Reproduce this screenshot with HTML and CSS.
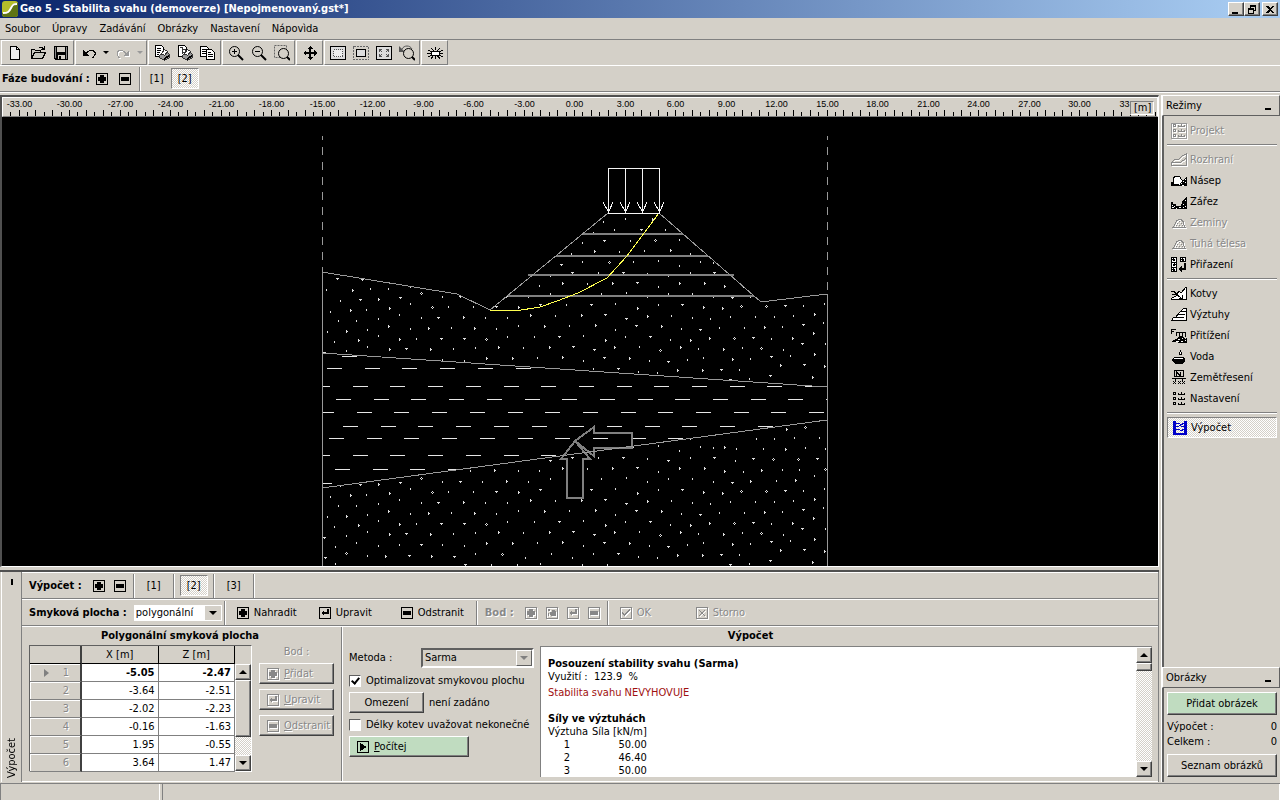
FILE: index.html
```html
<!DOCTYPE html>
<html lang="cs">
<head>
	<meta charset="UTF-8">
	<title>Geo 5 - Stabilita svahu</title>
	<link rel="stylesheet" href="styles.css">
</head>
<body>
	<!-- shared icons -->
	<svg class="defs" width="0" height="0">
		<symbol id="i-plus" viewBox="0 0 12 12">
			<rect x="0.5" y="0.5" width="11" height="11" rx="1" fill="none" stroke="currentColor"/>
			<path d="M4 2h4v2h2v4h-2v2h-4v-2h-2v-4h2z" fill="currentColor"/>
		</symbol>
		<symbol id="i-minus" viewBox="0 0 12 12">
			<rect x="0.5" y="0.5" width="11" height="11" rx="1" fill="none" stroke="currentColor"/>
			<path d="M2 4h8v4h-8z" fill="currentColor"/>
		</symbol>
		<symbol id="i-enter" viewBox="0 0 12 12">
			<rect x="0.5" y="0.5" width="11" height="11" rx="1" fill="none" stroke="currentColor"/>
			<path d="M2 6l3-3v2h3v-3h2v5h-5v2z" fill="currentColor"/>
		</symbol>
		<symbol id="i-insert" viewBox="0 0 12 12">
			<rect x="0.5" y="0.5" width="11" height="11" rx="1" fill="none" stroke="currentColor"/>
			<path d="M2 2h2v2h-2zM2 6h1v3h-1zM6 3h3v1h1v5h-5v-1h-1v-3h2z" fill="currentColor"/>
		</symbol>
		<symbol id="i-ok" viewBox="0 0 12 12">
			<rect x="0.5" y="0.5" width="11" height="11" rx="1" fill="none" stroke="currentColor"/>
			<path d="M2 5h1v1h1v1h1v-1h1v-1h1v-1h1v-1h1v-1h1v2h-1v1h-1v1h-1v1h-1v1h-1v1h-1v-1h-1v-1h-1z" fill="currentColor"/>
		</symbol>
		<symbol id="i-cancel" viewBox="0 0 12 12">
			<rect x="0.5" y="0.5" width="11" height="11" rx="1" fill="none" stroke="currentColor"/>
			<path d="M3 3l6 6M9 3l-6 6" fill="none" stroke="currentColor"/>
		</symbol>
		<symbol id="i-run" viewBox="0 0 12 12">
			<rect x="0.5" y="0.5" width="11" height="11" rx="1" fill="none" stroke="currentColor"/>
			<path d="M3 2l7 4l-7 4z" fill="currentColor"/>
		</symbol>
		<symbol id="i-heap" viewBox="0 0 16 16">
			<path d="M1 12.500h14M2.500 12l3-6l3-2h1l3 3l1 5M5 10.500h1M6 8.500h1M8 6.500h1M8 10.500h1M10 8.500h1M11 10.500h1" fill="none" stroke="currentColor"/>
		</symbol>
		<symbol id="i-list" viewBox="0 0 16 16">
			<path d="M2.500 1.500h2v2h-2zM2.500 6.500h2v2h-2zM2.500 11.500h2v2h-2zM7 3.500h7M7 8.500h7M7 13.500h7M7.500 2v1M10.500 1v2M13.500 2v1M7.500 7v1M10.500 6v2M13.500 7v1M7.500 12v1M10.500 11v2M13.500 12v1" fill="none" stroke="currentColor"/>
		</symbol>
	</svg>

	<header class="title">
		<svg class="logo" width="16" height="16" viewBox="0 0 16 16">
			<rect width="16" height="16" rx="3" fill="#b5bd2b"/>
			<path d="M0 12c5 0 6-1 8-5s4-5 8-5v11a3 3 0 0 1-3 3h-10a3 3 0 0 1-3-3z" fill="#5f7414"/>
			<path d="M1 12c5 0 6-1 8-5s3-4 6-4" fill="none" stroke="#fff" stroke-width="2"/>
		</svg>
		<h1>Geo 5 - Stabilita svahu (demoverze) [Nepojmenovaný.gst*]</h1>
		<div class="winbtns">
			<button aria-label="Minimalizovat"><svg width="10" height="9"><path d="M1 7h6v2h-6z"/></svg></button>
			<button aria-label="Obnovit"><svg width="10" height="9"><path d="M3 0h6v6h-2v-1h1v-3h-4v1h-1zM1 3h6v6h-6zM2 5v3h4v-3z" fill-rule="evenodd"/></svg></button>
			<button class="close" aria-label="Zavřít"><svg width="10" height="9"><path d="M1 1h2l2 2l2-2h2l-3 3.500l3 3.500h-2l-2-2l-2 2h-2l3-3.500z"/></svg></button>
		</div>
	</header>

	<nav class="menu">
		<a href="#">Soubor</a>
		<a href="#">Úpravy</a>
		<a href="#">Zadávání</a>
		<a href="#">Obrázky</a>
		<a href="#">Nastavení</a>
		<a href="#">Nápovìda</a>
	</nav>

	<div class="toolbar">
		<div class="group">
			<button aria-label="Nový"><svg class="ico" viewBox="0 0 16 16"><path d="M3.500 1.500h6l3 3v10h-9z" fill="#eee" stroke="#000"/><path d="M9.500 1.500v3h3" fill="none" stroke="#000"/></svg></button>
			<button aria-label="Otevřít"><svg class="ico" viewBox="0 0 16 16"><path d="M1.500 13.500v-9h3l1 1h5v2M1.500 13.500l3-6h11l-3 6z" fill="#c8c8c0" stroke="#000"/><path d="M9 2.500h3l2 2M14.500 1v4M11 4.500h3" fill="none" stroke="#000"/></svg></button>
			<button aria-label="Uložit"><svg class="ico" viewBox="0 0 16 16"><path d="M1 1h14v14h-13l-1-1z"/><path d="M4 2h8v5h-8z" fill="#d4d0c8"/><path d="M5 10h7v4h-7z" fill="#d4d0c8"/><path d="M6 11h2v3h-2z"/><path d="M2.500 2v11M13.500 2v12" stroke="#888"/></svg></button>
		</div>
		<div class="group">
			<button aria-label="Zpět"><svg class="ico" viewBox="0 0 16 16"><path d="M2 5v6h6z"/><path d="M5 8.500l2-2l2-1h3l2 2v2l-2 3h-1" fill="none" stroke="#000"/></svg></button>
			<button class="drop" aria-label="Seznam zpět"><i class="down"></i></button>
			<button disabled aria-label="Znovu"><svg class="ico" viewBox="0 0 16 16"><path d="M14 5v6h-6z" fill="#999"/><path d="M11 8.500l-2-2l-2-1h-3l-2 2v2l2 3h1" fill="none" stroke="#999"/></svg></button>
			<button class="drop" disabled aria-label="Seznam znovu"><i class="down"></i></button>
		</div>
		<div class="group">
			<button aria-label="Tisk"><svg class="ico" viewBox="0 0 16 16"><path d="M1.500 0.500h6l2 2v9h-8z" fill="#fff" stroke="#000"/><path d="M3 3.500h4M3 5.500h4M3 7.500h3M3 9.500h2" stroke="#000"/><path d="M5.500 10.500l5-4h2l3 3v3l-5 3l-5-3z" fill="#999" stroke="#333"/><path d="M7.500 8.500l3-4l3 2l-3 4z" fill="#fff" stroke="#333"/><path d="M10 13l5-3v2l-5 3z"/></svg></button>
			<button aria-label="Tisk obrázku"><svg class="ico" viewBox="0 0 16 16"><path d="M1.500 0.500h6l2 2v9h-8z" fill="#fff" stroke="#000"/><path d="M3 2.500h2v6M5 4.500h3v3h-3" fill="none" stroke="#333"/><path d="M5.500 10.500l5-4h2l3 3v3l-5 3l-5-3z" fill="#999" stroke="#333"/><path d="M7.500 8.500l3-4l3 2l-3 4z" fill="#fff" stroke="#333"/><path d="M10 13l5-3v2l-5 3z"/></svg></button>
			<button aria-label="Kopírovat"><svg class="ico" viewBox="0 0 16 16"><path d="M0.500 1.500h6l2 2v8h-8z" fill="#fff" stroke="#000"/><path d="M2 4.500h4M2 6.500h4M2 8.500h4" stroke="#000"/><path d="M6.500 4.500h5l3 3v7h-8z" fill="#fff" stroke="#000"/><path d="M8 7.500h3M8 9.500h5M8 11.500h5" stroke="#000"/></svg></button>
		</div>
		<div class="group">
			<button aria-label="Přiblížit"><svg class="ico round" viewBox="0 0 16 16"><circle cx="6.500" cy="6.500" r="5" fill="none" stroke="#000"/><path d="M6.500 4v5M4 6.500h5" stroke="#000"/><path d="M10 10l5 5" stroke="#000" stroke-width="2"/></svg></button>
			<button aria-label="Oddálit"><svg class="ico round" viewBox="0 0 16 16"><circle cx="6.500" cy="6.500" r="5" fill="none" stroke="#000"/><path d="M4 6.500h5" stroke="#000"/><path d="M10 10l5 5" stroke="#000" stroke-width="2"/></svg></button>
			<button aria-label="Výřez"><svg class="ico round" viewBox="0 0 16 16"><path d="M0.500 0.500h12v12h-12z" fill="none" stroke="#666" stroke-dasharray="2 1"/><circle cx="9.500" cy="8.500" r="5" fill="#d4d0c8" stroke="#000"/><path d="M13 12l3 3" stroke="#000" stroke-width="2"/></svg></button>
		</div>
		<div class="group">
			<button aria-label="Posun"><svg class="ico" viewBox="0 0 16 16"><path d="M8 1l3 3h-2v3h3v-2l3 3l-3 3v-2h-3v3h2l-3 3l-3-3h2v-3h-3v2l-3-3l3-3v2h3v-3h-2z"/></svg></button>
		</div>
		<div class="group">
			<button aria-label="Celá kresba"><svg class="ico" viewBox="0 0 16 16"><path d="M0.500 1.500h15v13h-15z" fill="#ddd" stroke="#000"/><path d="M3.500 4.500h9v7h-9z" fill="#eee" stroke="#555" stroke-dasharray="1 1"/></svg></button>
			<button aria-label="Výběr"><svg class="ico" viewBox="0 0 16 16"><path d="M0.500 1.500h15v13h-15z" fill="none" stroke="#666" stroke-dasharray="2 1"/><path d="M3.500 4.500h9v7h-9z" fill="#ddd" stroke="#000"/></svg></button>
			<button aria-label="Na okno"><svg class="ico" viewBox="0 0 16 16"><path d="M0.500 1.500h15v13h-15z" fill="#ddd" stroke="#000"/><path d="M3.500 7v-2.500h2.500M10 4.500h2.500v2.500M12.500 9v2.500h-2.500M6 11.500h-2.500v-2.500M4 5l2 2M12 5l-2 2M12 11l-2-2M4 11l2-2" fill="none" stroke="#555"/></svg></button>
			<button aria-label="Předchozí zobrazení"><svg class="ico round" viewBox="0 0 16 16"><path d="M0 1v6h6z" fill="#555"/><path d="M3 4c2-4 8-4 10 0" fill="none" stroke="#555"/><circle cx="9.500" cy="8.500" r="5" fill="#d4d0c8" stroke="#000"/><path d="M13 12l3 3" stroke="#000" stroke-width="2"/></svg></button>
		</div>
		<div class="group">
			<button aria-label="Nastavení kresby"><svg class="ico" viewBox="0 0 16 16"><path d="M8.500 2v3M8.500 11v3M4 3l3 3M13 3l-3 3M4 14l3-4M13 14l-3-4M1 5l4 2M16 5l-4 2M1 12l4-2M16 12l-4-2M0 8.500h4M12 8.500h4" stroke="#000"/><ellipse cx="8.500" cy="8.500" rx="4" ry="2.500" fill="#fff" stroke="#000"/></svg></button>
		</div>
	</div>

	<div class="phases">
		<b>Fáze budování :</b>
		<button aria-label="Přidat fázi"><svg class="box"><use href="#i-plus"/></svg></button>
		<button aria-label="Odebrat fázi"><svg class="box"><use href="#i-minus"/></svg></button>
		<i class="sep"></i>
		<button class="num">[1]</button>
		<button class="num on">[2]</button>
	</div>

	<div class="main">
		<div class="left">
			<div class="view">
				<div class="ruler">
					<svg id="ruler" width="100%" height="19"></svg>
					<span class="unit">[m]</span>
				</div>
				<svg class="canvas" width="100%" height="100%">
					<defs>
						<clipPath id="upper"><path d="M322 272L457 294L490 310L608 213H659L761 302L827 294V387L322 353z"/></clipPath>
						<clipPath id="clay"><path d="M322 353L827 387V420L322 488z"/></clipPath>
						<clipPath id="lower"><path d="M322 488L827 420V600H322z"/></clipPath>
						<path id="dots"/>
					</defs>
					<g transform="translate(-2 -117)" fill="none" shape-rendering="crispEdges">
						<g clip-path="url(#upper)"><use href="#dots" stroke="#ddd"/></g>
						<g clip-path="url(#lower)"><use href="#dots" y="185" stroke="#ddd"/></g>
						<g clip-path="url(#clay)" stroke="#e6e6e6" stroke-dasharray="15 22.7">
							<path d="M342 356.500H827M327 368.500H827M315 386.500H827M336 399.500H827M319 412.500H827M343 426.500H827M329 438.500H827M315 455.500H827M335 469.500H827M317 483.500H827"/>
						</g>
						<g stroke="#808080" stroke-width="2">
							<path d="M582 234H683M556 256H708M528 275H734M508 296H754"/>
							<path d="M575 441L594 427V433H632V448H594V456zM575 441L590 459H583V498H567V459H561z"/>
						</g>
						<path d="M322.500 136V272M827.500 136V294" stroke="#999" stroke-dasharray="8 7" stroke-dashoffset="4"/>
						<path d="M322.500 272V600M827.500 294V600" stroke="#999"/>
						<path d="M322 272L457 294L490 310L608 213M659 213L761 302L827 294M322 353L827 387M322 488L827 420" stroke="#999"/>
						<path d="M490 310L515 311L540 307L557 301L578 293L607 278L627 256L659 213" stroke="#ffff50"/>
						<path d="M608.500 168.500H659.500V213.500H608.500zM625.500 168V213M642.500 168V213M603 202L608.500 212L613 202M620 202L625.500 212L630 202M637 202L642.500 212L647 202M654 202L659.500 212L664 202" stroke="#f4f4f4"/>
					</g>
				</svg>
			</div>

			<div class="dock">
				<div class="tab"><i></i><span>Výpočet</span></div>
				<div class="panel">
					<div class="row">
						<b>Výpočet :</b>
						<button aria-label="Přidat výpočet"><svg class="box"><use href="#i-plus"/></svg></button>
						<button aria-label="Odebrat výpočet"><svg class="box"><use href="#i-minus"/></svg></button>
						<i class="sep"></i>
						<button class="num">[1]</button>
						<i class="sep"></i>
						<button class="num on">[2]</button>
						<i class="sep"></i>
						<button class="num">[3]</button>
						<i class="sep"></i>
					</div>
					<div class="row">
						<label for="surface"><b>Smyková plocha :</b></label>
						<span class="combo flat"><select id="surface"><option>polygonální</option><option>kruhová</option></select><i class="arrow"></i></span>
						<i class="sep"></i>
						<button class="act"><svg class="box"><use href="#i-plus"/></svg>Nahradit</button>
						<button class="act"><svg class="box"><use href="#i-enter"/></svg>Upravit</button>
						<button class="act"><svg class="box"><use href="#i-minus"/></svg>Odstranit</button>
						<i class="sep"></i>
						<b class="off">Bod :</b>
						<button disabled aria-label="Přidat bod"><svg class="box"><use href="#i-plus"/></svg></button>
						<button disabled aria-label="Vložit bod"><svg class="box"><use href="#i-insert"/></svg></button>
						<button disabled aria-label="Upravit bod"><svg class="box"><use href="#i-enter"/></svg></button>
						<button disabled aria-label="Odstranit bod"><svg class="box"><use href="#i-minus"/></svg></button>
						<i class="sep"></i>
						<button class="act ok" disabled><svg class="box"><use href="#i-ok"/></svg>OK</button>
						<button class="act" disabled><svg class="box"><use href="#i-cancel"/></svg>Storno</button>
					</div>
					<div class="body">
						<section class="points">
							<h2>Polygonální smyková plocha</h2>
							<div class="cols">
								<div class="grid">
									<table>
										<thead><tr><th></th><th>X [m]</th><th>Z [m]</th></tr></thead>
										<tbody>
											<tr class="cur"><th><i></i>1</th><td>-5.05</td><td>-2.47</td></tr>
											<tr><th>2</th><td>-3.64</td><td>-2.51</td></tr>
											<tr><th>3</th><td>-2.02</td><td>-2.23</td></tr>
											<tr><th>4</th><td>-0.16</td><td>-1.63</td></tr>
											<tr><th>5</th><td>1.95</td><td>-0.55</td></tr>
											<tr><th>6</th><td>3.64</td><td>1.47</td></tr>
										</tbody>
									</table>
									<div class="scroll">
										<button aria-label="Nahoru"><i class="up"></i></button>
										<div class="thumb"></div>
										<div class="track"></div>
										<button aria-label="Dolů"><i class="down"></i></button>
									</div>
								</div>
								<div class="side">
									<span class="off">Bod :</span>
									<button class="btn" disabled><svg class="box"><use href="#i-plus"/></svg><span><u>P</u>řidat</span></button>
									<button class="btn" disabled><svg class="box"><use href="#i-enter"/></svg><span><u>U</u>pravit</span></button>
									<button class="btn" disabled><svg class="box"><use href="#i-minus"/></svg><span><u>O</u>dstranit</span></button>
								</div>
							</div>
						</section>
						<section class="calc">
							<h2>Výpočet</h2>
							<div class="cols">
								<div class="form">
									<div class="line method">
										<label for="method">Metoda :</label>
										<span class="combo sunk"><select id="method"><option>Sarma</option><option>Bishop</option></select><i class="arrow"></i></span>
									</div>
									<label class="line"><input type="checkbox" checked>Optimalizovat smykovou plochu</label>
									<div class="line"><button class="btn limit">Omezení</button>není zadáno</div>
									<label class="line"><input type="checkbox">Délky kotev uvažovat nekonečné</label>
									<button class="btn go"><svg class="box"><use href="#i-run"/></svg><span><u>P</u>očítej</span></button>
								</div>
								<div class="output">
									<div class="report">
										<h3>Posouzení stability svahu (Sarma)</h3>
										<p>Využití : &nbsp;123.9 &nbsp;%</p>
										<p class="bad">Stabilita svahu NEVYHOVUJE</p>
										<h3>Síly ve výztuhách</h3>
										<table>
											<tr><th>Výztuha</th><th>Síla [kN/m]</th></tr>
											<tr><td>1</td><td>50.00</td></tr>
											<tr><td>2</td><td>46.40</td></tr>
											<tr><td>3</td><td>50.00</td></tr>
										</table>
									</div>
									<div class="scroll">
										<button aria-label="Nahoru"><i class="up"></i></button>
										<div class="thumb small"></div>
										<div class="track"></div>
										<button aria-label="Dolů"><i class="down"></i></button>
									</div>
								</div>
							</div>
						</section>
					</div>
				</div>
			</div>
		</div>

		<aside class="right">
			<h2>Režimy<i></i></h2>
			<div class="modes">
				<button disabled><svg class="ico framed" viewBox="0 0 16 16"><use href="#i-list"/></svg>Projekt</button>
				<hr>
				<button disabled><svg class="ico" viewBox="0 0 16 16"><path d="M0.500 13.500h15v-12l-5 3l-3 3h-4l-3 3zM1 10.500h8l6-4" fill="none" stroke="currentColor"/></svg>Rozhraní</button>
				<button><svg class="ico" viewBox="0 0 16 16"><path d="M2.500 11.500v-7l2-1h4l4 6v3z" fill="#fff" stroke="#000"/><path d="M0 9h2v3h14v1h-16zM8 11l3-3l4-4h1v9h-3z"/><path d="M10 10h1M12 8h1M11 12h2M14 9h1M14 6h1" stroke="#fff"/></svg>Násep</button>
				<button><svg class="ico" viewBox="0 0 16 16"><path d="M0 8h2v2h3v2h5l2-6l3-3h1v12h-16z"/><path d="M1 11h1M3 12h1M5 14h1M8 13h2M12 10h1M14 6h1M14 12h1M12 13h1M1 13h2" stroke="#fff"/></svg>Zářez</button>
				<button disabled><svg class="ico"><use href="#i-heap"/></svg>Zeminy</button>
				<button disabled><svg class="ico"><use href="#i-heap"/></svg>Tuhá tělesa</button>
				<button><svg class="ico" viewBox="0 0 16 16"><path d="M0.500 0.500h5v5h-5zM0.500 5.500h5v5h-5zM0.500 10.500h5v4h-5zM9.500 0.500h5v4h-5z" fill="#fff" stroke="#000"/><path d="M2 2l2 2M2 9l2-2M2 12l2 2M11 2l2 2M14 6v6h-4" stroke="#000" stroke-width="2" fill="none"/><path d="M7 12l4-3v6z"/></svg>Přiřazení</button>
				<hr>
				<button><svg class="ico" viewBox="0 0 16 16"><path d="M0.500 13.500v-1l5-3l2-4l3 1l4-5h1v12z" fill="#fff" stroke="#000"/><path d="M0 5.500h3l3 3M1 8.500h3v-3M3 6l7 6M8 12h3v-3" stroke="#000" fill="none"/></svg>Kotvy</button>
				<button><svg class="ico" viewBox="0 0 16 16"><path d="M0.500 13.500l2-3h2l5-6l3-3h3v12z" fill="#fff" stroke="#000"/><path d="M4 10.500h9M6 7.500h8M9 4.500h6" stroke="#000"/></svg>Výztuhy</button>
				<button><svg class="ico" viewBox="0 0 16 16"><path d="M0.500 6v-4.500h4M0 3.500h3M5.500 8v-3.500h9v4M8.500 4v4M11.500 4v4" stroke="#000" fill="none"/><path d="M1 14v-1l4-2l3-3h4l2 3l2-2v6h-4z"/><path d="M5 13h3M7 11h2M11 10h1M10 13h2M14 12h1" stroke="#fff"/></svg>Přitížení</button>
				<button><svg class="ico" viewBox="0 0 16 16"><path d="M9.500 1v1M8.500 3.500l1-1l1 1v2h-2z" stroke="#000" fill="#fff"/><path d="M1 10l2-2h9l2 2v2l-3 3h-7l-3-3z"/><path d="M3 9.500h9" stroke="#fff"/></svg>Voda</button>
				<button><svg class="ico" viewBox="0 0 16 16"><path d="M3.500 0.500h9v6h-9zM5.500 6v-4l4 4v-4M1 8.500h14M4.500 8v3M11.500 8v3M2 11l3 3M5 11l-3 3M7 11l3 3M10 11l-3 3M11 11l3 3M14 11l-3 3" stroke="#000" fill="none"/></svg>Zemětřesení</button>
				<button><svg class="ico"><use href="#i-list"/></svg>Nastavení</button>
				<hr>
				<button class="on"><svg class="ico" viewBox="0 0 16 16"><path d="M1 1h3v12h-3zM12 1h3v12h-3zM1 13h14v2h-14z" fill="#0000c8"/><path d="M4 3.500h3l2 1l3-1M4 6.500h2l2-1l2 1h2M4 9.500h3l2 1l3-1" stroke="#0000c8" fill="none"/></svg>Výpočet</button>
			</div>
			<h2>Obrázky<i></i></h2>
			<div class="pics">
				<button class="btn green">Přidat obrázek</button>
				<p>Výpočet :<span>0</span></p>
				<p>Celkem :<span>0</span></p>
				<button class="btn">Seznam obrázků</button>
			</div>
		</aside>
	</div>

	<footer class="status"><span></span><span></span></footer>
	<script src="script.js"></script>
</body>
</html>
```
FILE: styles.css
```css
*{
	margin: 0;
	padding: 0;
	box-sizing: border-box;
}
body{
	display: flex;
	flex-direction: column;
	height: 100vh;
	overflow: hidden;
	background: #d4d0c8;
	color: #000;
	font: 11px/14px "DejaVu Sans Condensed", "DejaVu Sans", sans-serif;
}
button, select{
	font: inherit;
	color: inherit;
	background: none;
	border: 0;
}
h2, h3{
	font-size: 11px;
}
svg{
	display: block;
	flex: none;
	shape-rendering: crispEdges;
}
.defs{
	position: absolute;
}
.ico{
	width: 16px;
	height: 16px;
}
.box{
	width: 12px;
	height: 12px;
}
.off, button:disabled{
	color: #888;
	text-shadow: 1px 1px #fff;
}
button:disabled svg{
	filter: drop-shadow(1px 1px 0 #fff);
}
.up, .down{
	display: block;
	border: 4px solid transparent;
	border-top: 4px solid #000;
	border-bottom: 0;
}
.up{
	border-top: 0;
	border-bottom: 4px solid #000;
}

/* title bar */
.title{
	display: flex;
	align-items: center;
	flex: none;
	height: 18px;
	padding: 0 2px;
	gap: 2px;
	background: linear-gradient(90deg, #0a246a, #a6caf0 97%);
	color: #fff;
}
.logo, .round{
	shape-rendering: auto;
}
.title h1{
	flex: 1;
	font-size: 11px;
	line-height: 16px;
	white-space: nowrap;
}
.winbtns{
	display: flex;
}
.winbtns button{
	width: 16px;
	height: 14px;
	padding: 1px 2px;
	background: #d4d0c8;
	border: 1px solid;
	border-color: #fff #404040 #404040 #fff;
	box-shadow: inset -1px -1px #808080;
}
.winbtns .close{
	margin-left: 2px;
}

/* menu and toolbars */
.menu{
	display: flex;
	align-items: center;
	flex: none;
	height: 21px;
	padding: 0 5px;
	gap: 12px;
}
.menu a{
	color: #000;
	text-decoration: none;
}
.toolbar, .phases{
	display: flex;
	flex: none;
	height: 27px;
	border-top: 1px solid #808080;
	border-bottom: 1px solid #fff;
}
.toolbar{
	padding-left: 1px;
	gap: 1px;
}
.group{
	display: flex;
	align-items: center;
	padding: 0 1px;
	border: 1px solid #fff;
	border-right-color: #808080;
	border-bottom-color: #808080;
}
.toolbar button{
	display: flex;
	justify-content: center;
	width: 23px;
}
.toolbar .drop{
	width: 11px;
}
.drop .down{
	border-width: 3px;
	border-bottom: 0;
}
.drop:disabled .down{
	border-top-color: #999;
}
.phases{
	align-items: center;
	border-top: 0;
	border-bottom: 1px solid #808080;
	height: 26px;
	padding-left: 2px;
}
.phases button, .row button{
	display: flex;
	align-items: center;
	justify-content: center;
	height: 21px;
}
.phases b{
	margin-right: 1px;
}
.phases button{
	width: 23px;
}
.sep{
	flex: none;
	width: 2px;
	height: 24px;
	margin: 0 2px;
	border-left: 1px solid #808080;
	border-right: 1px solid #fff;
}
.phases .num{
	width: 28px;
}
.phases .num.on, .row .num.on, .modes .on{
	background: repeating-conic-gradient(#fff 0 25%, #d4d0c8 0 50%) 0 0/2px 2px;
	border: 1px solid;
	border-color: #808080 #fff #fff #808080;
}

/* work area */
.main{
	display: flex;
	flex: 1;
	min-height: 0;
	border-top: 1px solid #fff;
	padding-top: 2px;
}
.left{
	display: flex;
	flex-direction: column;
	flex: 1;
	min-width: 0;
}
.view{
	display: flex;
	flex-direction: column;
	flex: 1;
	min-height: 0;
	border: 2px solid #505050;
	border-right: 1px solid #fff;
	border-bottom: 1px solid #fff;
	background: #000;
}
.ruler{
	position: relative;
	flex: none;
	height: 20px;
	background: #d4d0c8;
	border: 1px solid #fff;
	border-bottom: 1px solid #808080;
}
.ruler text{
	font: 9px "Liberation Sans", sans-serif;
	text-anchor: middle;
}
.unit{
	position: absolute;
	right: 3px;
	top: 3px;
	width: 24px;
	height: 14px;
	padding-left: 3px;
	line-height: 12px;
	background: #d4d0c8;
	border: 1px solid;
	border-color: #808080 #fff #fff #808080;
}
.canvas{
	flex: 1;
	min-height: 0;
}

/* bottom dock */
.dock{
	display: flex;
	flex: none;
	height: 212px;
	margin-top: 3px;
	border-top: 2px solid #505050;
}
.tab{
	display: flex;
	flex-direction: column;
	align-items: center;
	justify-content: space-between;
	width: 21px;
	margin-left: 1px;
	padding: 7px 0 4px;
	border-left: 1px solid #fff;
	border-right: 1px solid #808080;
}
.tab i{
	width: 2px;
	height: 6px;
	background: #000;
}
.tab span{
	writing-mode: vertical-rl;
	transform: rotate(180deg);
}
.panel{
	flex: 1;
	min-width: 0;
	display: flex;
	flex-direction: column;
	border-right: 1px solid #808080;
}
.row{
	display: flex;
	align-items: center;
	flex: none;
	height: 27px;
	padding-left: 7px;
	border-top: 1px solid #fff;
	border-bottom: 1px solid #808080;
}
.row b{
	margin-right: 7px;
}
.row button{
	width: 21px;
}
.row .num{
	width: 28px;
	margin: 0 3px;
}
.row .act{
	justify-content: flex-start;
	gap: 5px;
	width: 82px;
	padding-left: 9px;
}
.row .ok{
	width: 76px;
}
.row .off{
	margin: 0 7px 0 5px;
}
.combo{
	position: relative;
	display: flex;
}
.combo select{
	appearance: none;
	width: 88px;
	height: 16px;
	padding: 0 2px;
	background: #fff;
}
.combo .arrow{
	position: absolute;
	right: 1px;
	top: 1px;
	width: 16px;
	height: 14px;
	background: #d4d0c8;
	pointer-events: none;
}
.arrow::after{
	content: "";
	display: block;
	margin: 5px 4px;
	border: 4px solid transparent;
	border-top-color: #000;
	border-bottom: 0;
}
.sunk select{
	width: 113px;
	height: 20px;
	background: #d4d0c8;
	border: 2px solid;
	border-color: #606060 #fff #fff #606060;
}
.sunk .arrow{
	right: 2px;
	top: 2px;
	height: 16px;
	border: 1px solid;
	border-color: #fff #606060 #606060 #fff;
}
.sunk .arrow::after{
	margin: 5px 3px;
	border-top-color: #808080;
}
.body{
	display: flex;
	flex: 1;
	min-height: 0;
	border-top: 1px solid #fff;
	border-bottom: 1px solid #fff;
}
.body h2{
	height: 18px;
	line-height: 18px;
	text-align: center;
}
.points{
	display: flex;
	flex-direction: column;
	width: 320px;
	padding-left: 7px;
	border-right: 1px solid #808080;
}
.points h2{
	padding-right: 10px;
}
.calc{
	display: flex;
	flex-direction: column;
	flex: 1;
	min-width: 0;
	padding: 0 6px 4px;
	border-left: 1px solid #fff;
}
.cols{
	display: flex;
	flex: 1;
	min-height: 0;
}
.grid{
	display: flex;
	width: 223px;
	height: 127px;
	border: 1px solid #606060;
	border-right-color: #fff;
	border-bottom-color: #fff;
}
.grid table{
	width: 205px;
	table-layout: fixed;
	border-collapse: separate;
	border-spacing: 0;
}
.grid th, .grid td{
	height: 18px;
	line-height: 16px;
	font-weight: normal;
	border-right: 1px solid #808080;
	border-bottom: 1px solid #808080;
}
.grid thead th{
	border-color: #000;
}
.grid th:first-child{
	width: 52px;
	border-right: 2px solid #404040;
}
.grid tbody th{
	padding-right: 11px;
	text-align: right;
	color: #888;
	text-shadow: 1px 1px #fff;
	box-shadow: inset 1px 1px #fff;
}
.grid tbody th i{
	float: left;
	margin: 4px 0 0 14px;
	border: 4px solid transparent;
	border-left: 5px solid #808080;
	border-right: 0;
}
.grid td{
	padding-right: 3px;
	background: #fff;
	text-align: right;
}
.grid .cur td{
	font-weight: bold;
}
.scroll{
	display: flex;
	flex-direction: column;
	flex: none;
	width: 16px;
	background: repeating-conic-gradient(#fff 0 25%, #d4d0c8 0 50%) 0 0/2px 2px;
}
.grid .scroll{
	border-top: 18px solid #d4d0c8;
}
.scroll button, .thumb{
	flex: none;
	display: flex;
	align-items: center;
	justify-content: center;
	height: 16px;
	background: #d4d0c8;
	border: 1px solid;
	border-color: #fff #404040 #404040 #fff;
	box-shadow: inset -1px -1px #808080;
}
.thumb{
	height: 57px;
}
.thumb.small{
	height: 8px;
}
.track{
	flex: 1;
}
.side{
	display: flex;
	flex-direction: column;
	align-items: center;
	width: 90px;
	gap: 5px;
}
.side .off{
	height: 13px;
}
.btn{
	display: flex;
	align-items: center;
	justify-content: center;
	height: 21px;
	background: #d4d0c8;
	border: 1px solid;
	border-color: #fff #404040 #404040 #fff;
	box-shadow: inset -1px -1px #808080;
	white-space: nowrap;
}
.side .btn{
	justify-content: flex-start;
	width: 75px;
	padding-left: 7px;
	gap: 5px;
}
.form{
	display: flex;
	flex-direction: column;
	width: 191px;
	padding-top: 1px;
	gap: 1px;
	white-space: nowrap;
}
.line{
	display: flex;
	align-items: center;
	height: 21px;
	gap: 5px;
}
.method{
	justify-content: space-between;
	padding-right: 6px;
	height: 23px;
}
.form input{
	appearance: none;
	width: 12px;
	height: 12px;
	background: #fff;
	border: 1px solid;
	border-color: #606060 #fff #fff #606060;
}
.form input:checked::after{
	content: "";
	display: block;
	width: 3px;
	height: 6px;
	margin: 0 3px;
	border: solid #000;
	border-width: 0 2px 2px 0;
	transform: rotate(40deg);
}
.limit{
	width: 75px;
}
.go, .green{
	background: #c0dcc0;
}
.go{
	justify-content: flex-start;
	width: 120px;
	padding-left: 7px;
	gap: 5px;
}
.output{
	display: flex;
	flex: 1;
	min-width: 0;
	margin-top: 1px;
	background: #fff;
	border-top: 1px solid #808080;
	border-left: 1px solid #808080;
}
.report{
	flex: 1;
	overflow: hidden;
	padding: 10px 7px 0;
	line-height: 13px;
}
.report h3{
	line-height: 13px;
}
.report .bad{
	margin: 3px 0 13px;
	color: #a01010;
}
.report table{
	border-collapse: collapse;
}
.report th, .report td{
	padding-right: 4px;
	font-weight: normal;
	text-align: right;
}
.report td:first-child{
	padding-right: 22px;
}

/* right column */
.right{
	display: flex;
	flex-direction: column;
	width: 119px;
	margin-left: 2px;
	border-left: 1px solid #fff;
}
.right h2{
	display: flex;
	justify-content: space-between;
	align-items: center;
	flex: none;
	height: 21px;
	padding: 0 8px 0 3px;
	font-weight: normal;
	border: 1px solid;
	border-color: #fff #606060 #606060 #fff;
}
.right h2 i{
	width: 6px;
	height: 2px;
	margin-top: 6px;
	background: #000;
}
.modes{
	flex: 1;
	padding: 4px 3px;
	border-left: 2px solid #606060;
}
.modes button{
	display: flex;
	align-items: center;
	width: 100%;
	height: 21px;
	padding-left: 4px;
	gap: 3px;
}
.modes hr{
	height: 2px;
	margin: 3px 0;
	border: 0;
	border-top: 1px solid #808080;
	border-bottom: 1px solid #fff;
}
.framed{
	outline: 1px solid #999;
	outline-offset: -1px;
}
.pics{
	display: flex;
	flex-direction: column;
	height: 94px;
	padding: 4px 3px;
	border-left: 2px solid #606060;
}
.pics .btn{
	height: 23px;
}
.pics p{
	display: flex;
	justify-content: space-between;
	line-height: 15px;
}
.pics p:first-of-type{
	margin-top: 4px;
}
.pics p:last-of-type{
	margin-bottom: 5px;
}

/* status bar */
.status{
	display: flex;
	flex: none;
	gap: 2px;
	height: 17px;
	margin-top: 1px;
	border-top: 1px solid #808080;
}
.status span{
	width: 160px;
	border-left: 1px solid #808080;
	border-right: 1px solid #fff;
}
.status span:last-child{
	flex: 1;
}
```
FILE: script.js
```js
var NS = 'http://www.w3.org/2000/svg'
var ruler = document.getElementById('ruler')

// soil hatch: x,y and mark (> right, v down, o ring, nothing = tick)
var soil = '337,279v 362,280v 410,287v 421,293o 326,290 352,290> 370,289 388,289 442,297 460,297v 340,301 360,300v 378,299> 400,298v 410,304 432,307o 448,307 473,307 ' +
	'330,312 350,310> 366,310 389,308> 399,315 378,319 421,318 438,318v 463,317> 485,318 507,318 530,315> 555,316 566,305 540,305v 518,307> 338,321 356,321 388,326> 367,330 ' +
	'346,331> 327,332 410,329 428,328> 451,328 474,328> 496,329 518,326 544,326> 569,326 378,336 334,342 358,340> 399,339> 416,339 441,339v 464,339v 486,339o 507,337 534,337 559,337v ' +
	'528,297 550,294 539,286 562,283> 550,276v 561,265v 572,273v 571,254 603,222 625,219 652,219> 614,230 641,230v 665,230 593,233o 655,240o 679,240 630,241 604,241v 582,243 ' +
	'594,251> 619,252 644,251 670,250> 690,254 582,262 609,262o 633,262 658,261 679,266 700,262 598,273 623,273v 647,274 668,276v 690,273 714,273v 587,284 612,283> 637,283v 658,287 ' +
	'679,283> 704,283> 724,286> 743,287 601,294 626,293 647,297 668,294 692,294 713,297 732,298v 741,306o 766,306o 785,306v 803,306 824,304 591,305v 615,304 637,308> 658,305 682,305v ' +
	'703,307> 722,308> 581,315> 605,315v 626,319v 647,316> 671,316 692,318 710,319 730,317 755,317 774,317 793,316 814,314> 595,325> 615,330 636,326v 661,326> 681,329 700,330v 719,328 ' +
	'744,328 764,327> 782,327 803,325v 823,323 813,333> 583,336 605,340> 625,337 650,337v 670,340 690,340> 709,338> 734,338o 753,338v 771,339 792,338> 802,344v 825,344 ' +
	'367,347 389,349> 406,349v 430,349> 453,349 475,348 346,351 324,353v 498,347> 523,348 549,347> 573,347v 486,358> 512,358> 537,358 562,357> 442,360 464,361 551,369 ' +
	'356,358 378,361 399,360 421,360v 335,362 346,368o 367,371 385,371> 409,371v 431,371> 454,372v 475,369 502,369o 525,373 572,373 325,373v 335,379 465,380v 491,380 517,380 540,379 ' +
	'494,285> 518,286 470,286 482,297 506,296> 496,307v 594,350v 614,347> 639,347 660,350o 680,347> 698,349 723,349> 742,348 761,348o 771,357v 783,350 814,354> 583,361 604,358v 629,358> ' +
	'649,361 668,362v 687,360 703,358 732,359> 750,359 780,365> 790,356 804,365v 824,366> 593,369 618,369v 638,372 657,373 677,370> 702,370> 721,370v 739,370 749,379 770,376v 812,377> 730,380v 582,380 607,380 ' +
	'805,242o 786,244> 794,253 819,253 774,254 756,254 713,263 724,262> 736,264 763,264 785,264> 805,263 825,264 753,274v 773,274o 798,274o 817,274v 735,276 761,285> 782,285 799,285 825,284o 750,296> 776,296 795,295> 814,291'

var marks = {
	'': 'm0 -.5v2',
	'>': 'm0 -.5v3m.5 -1.5h1',
	'v': 'm-1.5 0h3m-1.5 .5v1',
	'o': 'm-.5 0h1m-2 1h1m1 0h1m-2 1h1'
}

function drawSoil(){
	var d = ''
	soil.split(' ').forEach(function(s){
		var m = s.match(/(\d+),(\d+)(.?)/)
		d += 'M' + (+m[1] + 0.5) + ' ' + (+m[2] - 0.5) + marks[m[3]]
	})
	document.getElementById('dots').setAttribute('d', d)
}

// 3 m = 50.5 px, zero lies at 571 px inside the ruler
function drawRuler(){
	var zero = 571
	var step = 50.5 / 6
	var width = ruler.clientWidth
	var d = ''
	for (var i = -67; zero + i * step < width; i++) {
		var x = Math.round(zero + i * step) + 0.5
		d += 'M' + x + ' 18V' + (i % 2 ? 14 : 12)
		if (i % 6 === 0) {
			var t = document.createElementNS(NS, 'text')
			var label = (i / 2).toFixed(2)
			// the unit box cuts the last label
			if (x + 12 > width - 28) {
				label = label.split('.')[0]
				x -= 6
			}
			t.setAttribute('x', x)
			t.setAttribute('y', 9)
			t.textContent = label
			ruler.appendChild(t)
		}
	}
	var p = document.createElementNS(NS, 'path')
	p.setAttribute('d', d)
	p.setAttribute('stroke', '#000')
	ruler.appendChild(p)
}

window.onload = function(){
	drawSoil()
	drawRuler()
}
```
